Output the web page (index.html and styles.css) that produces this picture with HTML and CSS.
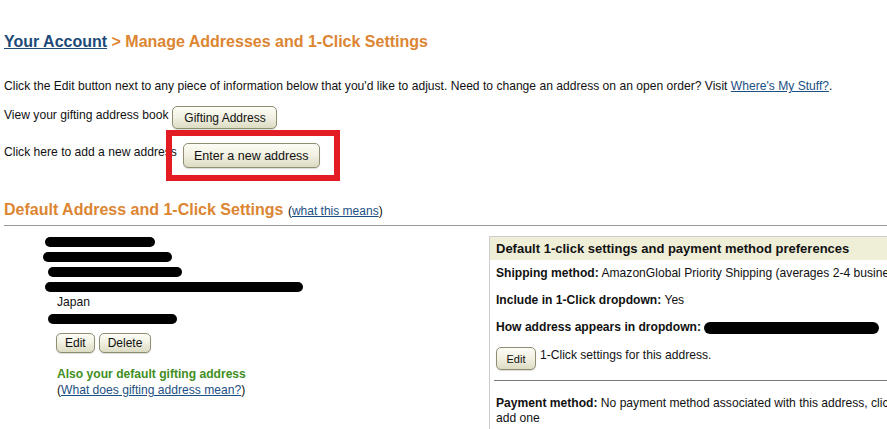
FILE: index.html
```html
<!DOCTYPE html>
<html lang="en">
<head>
  <meta charset="UTF-8" />
  <title>Manage Addresses and 1-Click Settings</title>
  <link rel="stylesheet" href="styles.css">
</head>
<body>

  <div class="page">
    <h1 class="title"><a href="#">Your Account</a> &gt; Manage Addresses and 1-Click Settings</h1>

    <p class="intro">Click the Edit button next to any piece of information below that you'd like to adjust. Need to change an address on an open order? Visit <a href="#">Where's My Stuff?</a>.</p>

    <div class="action-row first">
      <span>View your gifting address book</span>
      <button class="btn">Gifting Address</button>
    </div>

    <div class="action-row second">
      <span>Click here to add a new address</span>
      <span class="marked">
        <button class="btn btn-big">Enter a new address</button>
      </span>
    </div>

    <h2 class="section-title">Default Address and 1-Click Settings <span class="aside">(<a href="#">what this means</a>)</span></h2>
    <hr class="section-rule">

    <div class="columns">
      <div class="address">
        <div class="line"><span class="redact r1"></span></div>
        <div class="line"><span class="redact r2"></span></div>
        <div class="line"><span class="redact r3"></span></div>
        <div class="line"><span class="redact r4"></span></div>
        <div class="line">Japan</div>
        <div class="line"><span class="redact r5"></span></div>

        <div class="address-buttons">
          <button class="btn btn-small">Edit</button>
          <button class="btn btn-small">Delete</button>
        </div>

        <p class="gift-note">Also your default gifting address</p>
        <p class="gift-help">(<a href="#">What does gifting address mean?</a>)</p>
      </div>

      <div class="settings">
        <div class="settings-head">Default 1-click settings and payment method preferences</div>
        <div class="settings-body">
          <p><strong>Shipping method:</strong> AmazonGlobal Priority Shipping (averages 2-4 business days)</p>
          <p><strong>Include in 1-Click dropdown:</strong> Yes</p>
          <p><strong>How address appears in dropdown:</strong> <span class="redact r6"></span></p>
          <div class="edit-row">
            <button class="btn btn-tiny">Edit</button>
            <span>1-Click settings for this address.</span>
          </div>
          <hr class="settings-rule">
          <p class="payment"><strong>Payment method:</strong> No payment method associated with this address, click here to add one</p>
        </div>
      </div>
    </div>
  </div>

</body>
</html>
```

FILE: styles.css
```css
:root {
  --link-color: #1c4f83;
  --orange: #dc8532;
  --green: #3f8f22;
  --text-color: #111;
}

* {
  box-sizing: border-box;
}

html, body {
  overflow: hidden;
}

body {
  margin: 0;
  background: #fff;
  color: var(--text-color);
  font-family: "Liberation Sans", Arial, sans-serif;
  font-size: 12.1px;
  line-height: 15px;
}

a {
  color: var(--link-color);
}

.page {
  width: 960px;
  padding: 32px 4px 0;
}

.title {
  margin: 0;
  font-size: 16px;
  line-height: 19px;
  color: var(--orange);
}

.title a {
  color: #1d4a78;
}

.intro {
  margin: 28px 0 0;
}

.action-row {
  display: flex;
  align-items: flex-start;
  gap: 4px;
}

.action-row span {
  padding-top: 2px;
}

.action-row.first {
  margin-top: 12px;
}

.action-row.second {
  margin-top: 14px;
}

.btn {
  font-family: "Liberation Sans", Arial, sans-serif;
  font-size: 12px;
  color: #111;
  background: linear-gradient(#fdfdf6, #f1f0e2 50%, #dcdbc2);
  border: 1px solid #8f8d72;
  border-radius: 5px;
  box-shadow: 0 1px 1px rgba(0, 0, 0, 0.15);
  height: 23px;
  padding: 0 11px;
  cursor: pointer;
}

.action-row .btn {
  width: 105px;
  padding: 0;
}

.action-row .btn-big {
  font-size: 12.5px;
  height: 25px;
  width: 137px;
}

.marked {
  position: relative;
  display: inline-block;
  margin-left: 2px;
}

.action-row .marked {
  padding-top: 0;
}

.marked::after {
  content: "";
  position: absolute;
  left: -17px;
  right: -20px;
  top: -13px;
  bottom: -13px;
  border: 6px solid #e31b23;
  pointer-events: none;
}

.section-title {
  margin: 32px 0 0;
  font-size: 16px;
  line-height: 19px;
  color: var(--orange);
}

.aside {
  font-size: 12px;
  font-weight: normal;
  color: var(--text-color);
}

.section-rule {
  margin: 4px 0 0;
  border: none;
  border-top: 1px solid #999;
  width: 883px;
}

.columns {
  display: grid;
  grid-template-columns: 485px 470px;
}

.address {
  padding: 8px 0 0 53px;
}

.line {
  height: 15px;
}

.line:nth-child(5),
.line:nth-child(6) {
  margin-top: 1px;
}

.redact {
  display: inline-block;
  height: 10px;
  background: #000;
  border-radius: 6px;
  vertical-align: middle;
}

.r1 { width: 110px; margin-left: -12px; }
.r2 { width: 129px; margin-left: -14px; }
.r3 { width: 134px; margin-left: -9px; }
.r4 { width: 258px; margin-left: -12px; }
.r5 { width: 129px; margin-left: -9px; }
.r6 { width: 175px; height: 12px; }

.address-buttons {
  display: flex;
  gap: 4px;
  margin: 7px 0 0 -1px;
}

.btn-small {
  height: 20px;
  padding: 0 8px;
}

.gift-note {
  margin: 14px 0 0;
  font-weight: bold;
  color: var(--green);
}

.gift-help {
  margin: 1px 0 0;
}

.settings {
  margin-top: 10px;
  border-left: 1px solid #ccc;
  border-top: 1px solid #ccc;
}

.settings-head {
  background: #efefd8;
  padding: 4px 6px;
  font-size: 13px;
  font-weight: bold;
  line-height: 15px;
}

.settings-body {
  padding: 6px 0 0 6px;
}

.settings-body p {
  margin: 0 0 12px;
  white-space: nowrap;
}

.settings-body .payment {
  white-space: normal;
  width: 455px;
}

.edit-row {
  display: flex;
  align-items: flex-start;
  gap: 4px;
  margin-top: 0;
}

.edit-row span {
  padding-top: 1px;
}

.btn-tiny {
  font-size: 11px;
  width: 40px;
  padding: 0;
}

.settings-rule {
  margin: 10px 0 15px -2px;
  border: none;
  border-top: 1px solid #777;
}
```
